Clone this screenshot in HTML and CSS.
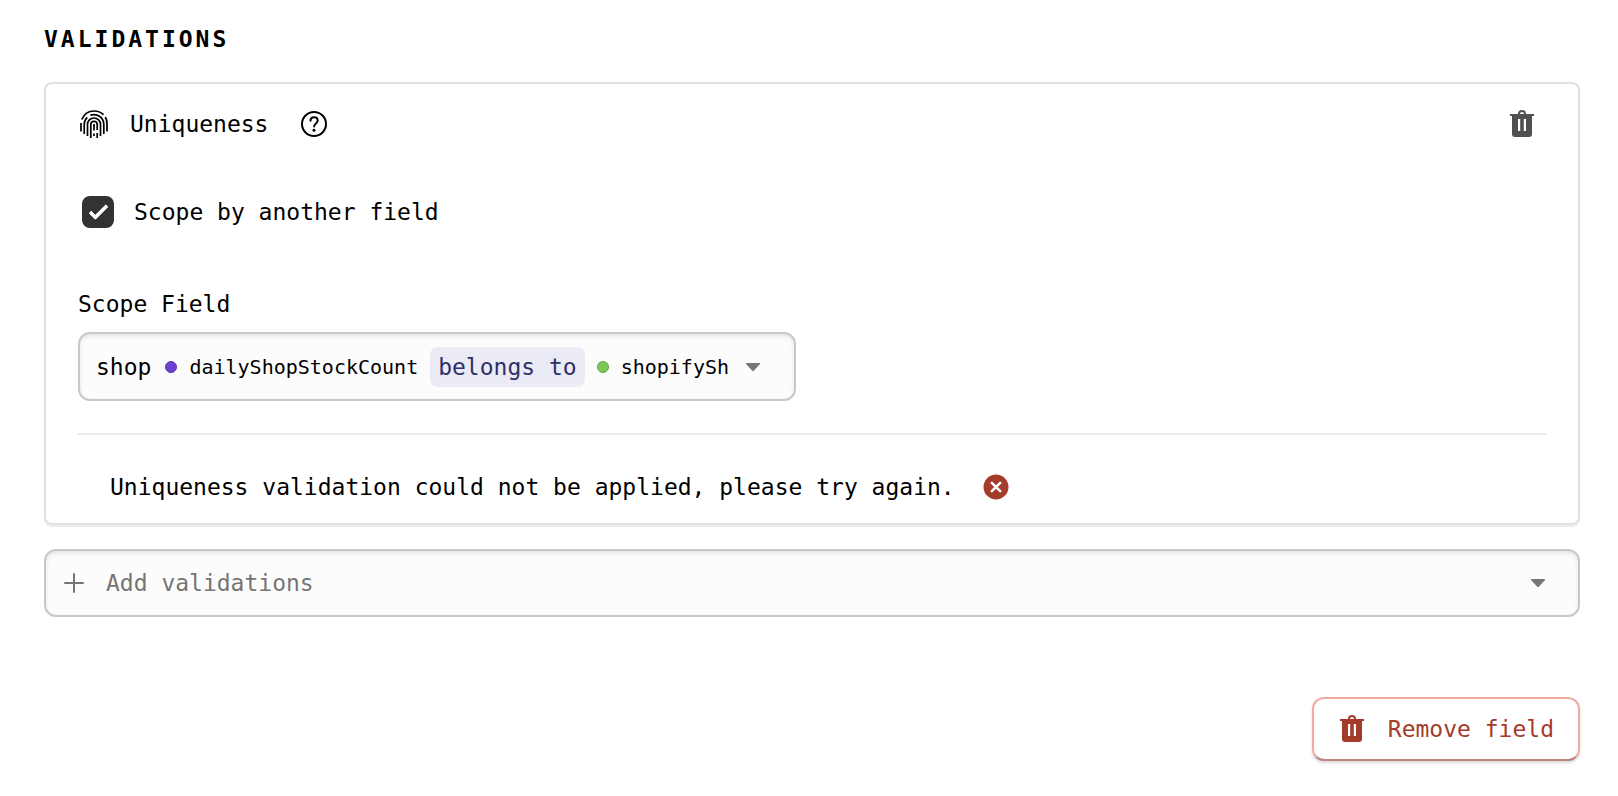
FILE: index.html
```html
<!DOCTYPE html>
<html lang="en">
<head>
    <meta charset="UTF-8">
    <meta name="viewport" content="width=device-width, initial-scale=1.0">
    <title>Validations</title>
    <link rel="stylesheet" href="styles.css">
</head>
<body>
    <svg class="sprite" aria-hidden="true">
        <symbol id="trash" viewBox="0 0 24 28">
            <path d="M9 5V4a3 3 0 0 1 6 0v1" fill="none" stroke="currentColor" stroke-width="2"/>
            <path fill="currentColor" fill-rule="evenodd" d="M0 4h24v2h-2v18a3 3 0 0 1-3 3H5a3 3 0 0 1-3-3V6H0zM8 9v12h2.200V9zM13.800 9v12h2.200V9z"/>
        </symbol>
        <symbol id="caret" viewBox="0 0 14 8">
            <path fill="currentColor" d="M0 0h14v1L7.500 8h-1L0 1z"/>
        </symbol>
    </svg>

    <main class="page">
        <h2>VALIDATIONS</h2>

        <section class="card">
            <div class="card-header">
                <svg class="fingerprint" viewBox="0 0 28 28" aria-hidden="true">
                    <path d="M1 13V21.500M1.800 9.500C4 4 8.500 1 14 1c3.800 0 7 1.300 9.600 3.700M25.300 7C26.500 9 27 11.300 27 13.500V21.500"/>
                    <path d="M4.200 24V14.500c0-3 1.200-5.400 3-7.200M10.300 5.300c6.500-2.500 13.500 1.800 13.500 9.200V24"/>
                    <path d="M7.500 26V14.500a6.500 6.500 0 0 1 13 0V26"/>
                    <path d="M10.800 28V14.500a3.200 3.200 0 0 1 6.400 0V20M17.200 23V28M14 14V20.500M14 23.500V26"/>
                </svg>
                <span class="card-title">Uniqueness</span>
                <svg class="help" viewBox="0 0 26 26" role="img" aria-label="Help">
                    <circle cx="13" cy="13" r="12"/>
                    <path d="M9.500 9.800c0-2.100 1.600-3.500 3.600-3.500s3.600 1.300 3.600 3.300c0 2.900-3.600 2.900-3.600 6"/>
                    <circle class="help-dot" cx="13" cy="19.300" r="1.500"/>
                </svg>
                <button type="button" class="icon-button" aria-label="Remove validation">
                    <svg class="trash"><use href="#trash"/></svg>
                </button>
            </div>

            <div class="check-row">
                <input type="checkbox" id="scope-by-field" checked>
                <label for="scope-by-field">Scope by another field</label>
            </div>

            <label class="field-label" for="scope-field">Scope Field</label>
            <button type="button" id="scope-field" class="control scope-field" aria-haspopup="listbox">
                <span class="field-name">shop</span>
                <span class="dot dot-purple"></span>
                <span class="model">dailyShopStockCount</span>
                <span class="relation">belongs to</span>
                <span class="dot dot-green"></span>
                <span class="model">shopifySh</span>
                <svg class="caret"><use href="#caret"/></svg>
            </button>

            <div class="error" role="alert">
                <span>Uniqueness validation could not be applied, please try again.</span>
                <svg class="error-icon" viewBox="0 0 26 26" aria-hidden="true">
                    <circle cx="13" cy="13" r="12.500"/>
                    <path d="M8.800 8.800l8.400 8.400M17.200 8.800l-8.400 8.400"/>
                </svg>
            </div>
        </section>

        <div class="add">
            <svg class="plus" viewBox="0 0 20 20" aria-hidden="true">
                <path d="M10 1v18M1 10h18"/>
            </svg>
            <select class="control" aria-label="Add validations">
                <option>Add validations</option>
            </select>
            <svg class="caret"><use href="#caret"/></svg>
        </div>

        <div class="actions">
            <button type="button" class="remove">
                <svg class="trash"><use href="#trash"/></svg>
                Remove field
            </button>
        </div>
    </main>
</body>
</html>
```

FILE: styles.css
```css
* {
    box-sizing: border-box;
}
body {
    margin: 0;
    background-color: #fff;
    color: #000;
    font-family: "DejaVu Sans Mono", monospace;
    font-size: 23px;
    line-height: 32px;
}
button,
select {
    font: inherit;
    color: inherit;
    cursor: pointer;
}
svg {
    display: block;
    flex: none;
}
.sprite {
    position: absolute;
    width: 0;
    height: 0;
}
.page {
    padding: 23px 38px 32px 44px;
}
h2 {
    margin: 0 0 27px;
    font-size: 23px;
    font-weight: bold;
    letter-spacing: 3px;
}

/* Validation card */
.card {
    padding: 16px 32px 20px;
    border: 2px solid #e0e0e0;
    border-radius: 8px;
    box-shadow: 0 2px 0 #ececec;
}
.card-header {
    display: flex;
    align-items: center;
}
.fingerprint {
    width: 28px;
    height: 28px;
    margin: 0 22px 0 2px;
    fill: none;
    stroke: #000;
    stroke-width: 1.700;
}
.help {
    width: 26px;
    height: 26px;
    margin-left: 33px;
    fill: none;
    stroke: #000;
    stroke-width: 2;
    stroke-linecap: round;
}
.help-dot {
    fill: #000;
    stroke: none;
}
.icon-button {
    display: flex;
    align-items: center;
    justify-content: center;
    width: 48px;
    height: 48px;
    margin-left: auto;
    padding: 0;
    border: none;
    background: none;
    color: #505050;
}
.trash {
    width: 24px;
    height: 28px;
}
.check-row {
    display: flex;
    align-items: center;
    gap: 20px;
    margin: 48px 0 60px 4px;
}
input[type="checkbox"] {
    display: grid;
    place-items: center;
    width: 32px;
    height: 32px;
    margin: 0;
    border-radius: 8px;
    background-color: #333;
    appearance: none;
}
input[type="checkbox"]:checked::before {
    content: "";
    width: 15px;
    height: 6px;
    margin-bottom: 5px;
    border: solid #fff;
    border-width: 0 0 4px 4px;
    border-radius: 2px;
    transform: rotate(-45deg);
}
.field-label {
    display: block;
    margin-bottom: 12px;
}

/* Dropdowns */
.control {
    height: 68px;
    border: 2px solid #c8c8c8;
    border-radius: 12px;
    background-color: #fcfcfc;
    box-shadow: inset 0 2px 4px rgba(0, 0, 0, 0.1);
}
.scope-field {
    display: flex;
    align-items: center;
    gap: 12px;
    width: 718px;
    max-width: 100%;
    height: 69px;
    padding: 0 16px;
}
.field-name {
    margin-right: 2px;
}
.dot {
    width: 12px;
    height: 12px;
    border: 1px solid #5c37b3;
    border-radius: 50%;
    background-color: #6d41cd;
}
.dot-green {
    border-color: #62a744;
    background-color: #7dc65b;
}
.model {
    font-size: 20px;
}
.relation {
    padding: 4px 8px;
    border-radius: 8px;
    background-color: #ebebf5;
    color: #2f2f69;
}
.caret {
    width: 14px;
    height: 8px;
    color: #757575;
}
.scope-field .caret {
    margin-left: 5px;
}

.error {
    display: flex;
    align-items: center;
    gap: 28px;
    margin-top: 32px;
    padding: 36px 32px 0;
    border-top: 2px solid #ebebeb;
}
.error-icon {
    width: 26px;
    height: 26px;
    fill: #a43b2b;
    stroke: #fff;
    stroke-width: 2.500;
    stroke-linecap: round;
}
.error-icon circle {
    stroke: none;
}

.add {
    position: relative;
    margin-top: 24px;
    color: #757575;
}
.add .control {
    display: block;
    width: 100%;
    padding: 0 60px;
    appearance: none;
}
/* The icons lie over the select */
.plus,
.add .caret {
    position: absolute;
    top: 50%;
    transform: translateY(-50%);
    pointer-events: none;
}
.plus {
    left: 20px;
    width: 20px;
    height: 20px;
    stroke: #757575;
    stroke-width: 2;
    stroke-linecap: round;
}
.add .caret {
    right: 35px;
}

.actions {
    display: flex;
    justify-content: flex-end;
    margin-top: 80px;
}
.remove {
    display: flex;
    align-items: center;
    gap: 24px;
    height: 64px;
    padding: 0 24px 0 26px;
    border: 2px solid #f0aca4;
    border-bottom-color: #b9857e;
    border-radius: 12px;
    background-color: #fff;
    box-shadow: 0 2px 3px rgba(0, 0, 0, 0.15);
    color: #a43b2b;
}
```
